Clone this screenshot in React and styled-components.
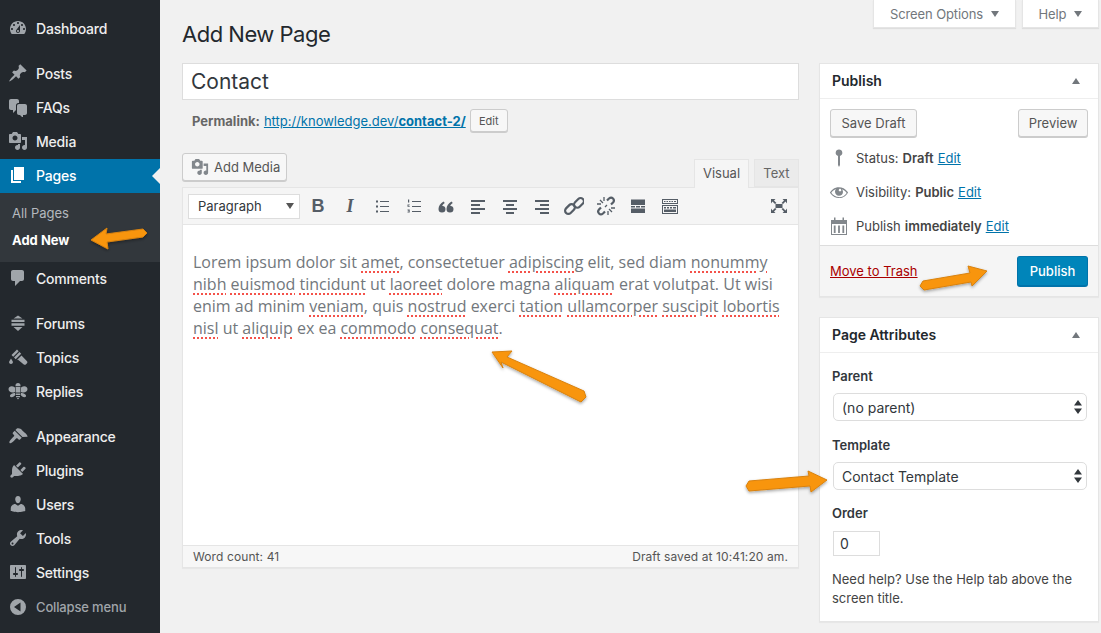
import styled, { createGlobalStyle } from 'styled-components';

const GlobalStyle = createGlobalStyle`
  html, body {
    margin: 0;
    padding: 0;
    background: #f1f1f1;
  }
  * {
    box-sizing: border-box;
  }
`;

const uiFont = `Inter, Roboto, "Liberation Sans", sans-serif`;

const paths = {
  dashboard:
    'M3.76 16h12.48c1.1-1.37 1.76-3.11 1.76-5 0-4.42-3.58-8-8-8s-8 3.58-8 8c0 1.89.66 3.63 1.76 5zM10 4c.55 0 1 .45 1 1s-.45 1-1 1-1-.45-1-1 .45-1 1-1zM6 6c.55 0 1 .45 1 1s-.45 1-1 1-1-.45-1-1 .45-1 1-1zm8 0c.55 0 1 .45 1 1s-.45 1-1 1-1-.45-1-1 .45-1 1-1zm-5.37 5.55L12 7v6c0 1.1-.9 2-2 2s-2-.9-2-2c0-.57.24-1.08.63-1.45zM4 10c.55 0 1 .45 1 1s-.45 1-1 1-1-.45-1-1 .45-1 1-1zm12 0c.55 0 1 .45 1 1s-.45 1-1 1-1-.45-1-1 .45-1 1-1zm-5 3c0-.55-.45-1-1-1s-1 .45-1 1 .45 1 1 1 1-.45 1-1z',
  post: 'M10.44 3.02l1.82-1.82 6.36 6.35-1.83 1.82c-1.05-.68-2.48-.57-3.41.36l-.75.75c-.92.93-1.04 2.35-.35 3.41l-1.83 1.82-2.41-2.41-2.8 2.79c-.42.42-3.38 2.71-3.8 2.29s1.86-3.39 2.28-3.81l2.79-2.79L4.1 9.36l1.83-1.82c1.05.69 2.48.57 3.41-.36l.75-.75c.93-.92 1.05-2.35.35-3.41z',
  chat: 'M11 6h-.82C9.07 6 8 7.2 8 8.16V13l-3 3v-3H3c-1.11 0-2-.89-2-2V4c0-1.1.89-2 2-2h6c1.11 0 2 .89 2 2v2zm0 1h6c1.1 0 2 .9 2 2v7c0 1.11-.9 2-2 2h-2v3l-3-3h-1c-1.11 0-2-.89-2-2V9c0-1.1.89-2 2-2z',
  media:
    'M13 11V4c0-.55-.45-1-1-1h-1.67L9 1H5L3.67 3H2c-.55 0-1 .45-1 1v7c0 .55.45 1 1 1h10c.55 0 1-.45 1-1zM7 4.5c1.38 0 2.5 1.12 2.5 2.5S8.38 9.5 7 9.5 4.5 8.38 4.5 7 5.62 4.5 7 4.5zM14 6h5v10.5c0 1.38-1.12 2.5-2.5 2.5S14 17.88 14 16.5s1.12-2.5 2.5-2.5c.17 0 .34.02.5.05V9h-3V6zm-4 8.05V13h2v3.5c0 1.38-1.12 2.5-2.5 2.5S7 17.88 7 16.5 8.12 14 9.5 14c.17 0 .34.02.5.05z',
  page: 'M6 15V2h10v13H6zm-1 1h8v2H3V5h2v11z',
  comment:
    'M5 2h9c1.1 0 2 .9 2 2v7c0 1.1-.9 2-2 2h-2l-5 5v-5H5c-1.1 0-2-.9-2-2V4c0-1.1.9-2 2-2z',
  forum:
    'M10 2.500l4.500 3H5.500zM3.500 6.700h13v2.400h-13zM3.500 10.300h13v2.400h-13zM5.500 14h9L10 18z',
  topic:
    'M3.500 8L9 2.500 10.700 4.200 5.200 9.700zM6 10.500L11.500 5l1.700 1.700L7.700 12.200zM8.700 13.200L13.500 8.400l5.500 5.800c.5.6.5 1.400 0 2l-1.200 1.200c-.6.5-1.400.5-2 0L10 12.800zM3 11.500l1.800 3c.5 1.200-.5 2.500-1.800 2.500s-2.300-1.300-1.800-2.500z',
  reply:
    'M10 2a2.500 2.500 0 0 1 2.500 2.500v.7h-5v-.7A2.500 2.500 0 0 1 10 2zM7.600 6h4.800v5.500H7.600zM7 6.500C4 4.500 1 5 .5 8c0 3 3.500 4.500 6.500 3zM13 6.500c3-2 6-1.500 6.500 1.500 0 3-3.500 4.500-6.500 3zM7 12c-2.500 0-5.500 1.500-5 3.500 1.500 1.500 4 .5 5.500-2zM13 12c2.500 0 5.500 1.500 5 3.500-1.500 1.500-4 .5-5.500-2zM8 12.500h4V14H8zM8 15h4v1.300H8zM8.800 17h2.400L10 18.500z',
  appearance:
    'M14.48 11.06L7.41 3.99l1.5-1.5c.5-.56 2.3-.47 3.51.32 1.21.8 1.43 1.28 2.66 2.51 1.23 1.22 2.22 1.83 3.09 2.73.86.9 1.47 2.23 1.41 2.7zm-.71.71L6.7 4.7 4.93 6.47c-.39.39-.39 1.02 0 1.41l1.06 1.06c.39.39.39 1.03 0 1.42-.6.6-1.43 1.27-2.21 2.05-2.06 2.06-3.02 3.62-2.17 4.47.84.85 2.41-.11 4.47-2.17.78-.78 1.45-1.61 2.05-2.21.39-.39 1.03-.39 1.42 0l1.06 1.06c.39.39 1.02.39 1.41 0z',
  plugin:
    'M13.11 4.36L9.87 7.6 8 5.73l3.24-3.24c.35-.34 1.05-.2 1.56.32.52.51.66 1.21.31 1.55zm-8 1.77l.91-1.12 9.01 9.01-1.19.84c-.71.71-2.63 1.16-3.82 1.16H6.14L4.9 17.26c-.59.59-1.54.59-2.12 0-.59-.58-.59-1.53 0-2.12l1.24-1.24v-3.88c0-1.13.4-3.19 1.09-3.89zm7.26 3.97l3.24-3.24c.34-.35 1.04-.21 1.55.31.52.51.66 1.21.31 1.55l-3.24 3.25z',
  users:
    'M10 9.25c-2.27 0-2.73-3.44-2.73-3.44C7 4.02 7.82 2 9.97 2c2.16 0 2.98 2.02 2.71 3.81 0 0-.41 3.44-2.68 3.44zm0 2.57L12.72 10c2.39 0 4.52 2.33 4.52 4.53v2.49s-3.65 1.13-7.24 1.13c-3.65 0-7.24-1.13-7.24-1.13v-2.49c0-2.25 1.94-4.48 4.47-4.48z',
  tools:
    'M16.68 9.77c-1.34 1.34-3.3 1.67-4.95.99l-5.41 6.52c-.99.99-2.59.99-3.58 0s-.99-2.59 0-3.57l6.52-5.42c-.68-1.65-.35-3.61.99-4.95 1.28-1.28 3.12-1.62 4.72-1.06l-2.89 2.89 2.82 2.82 2.86-2.87c.53 1.58.18 3.4-1.08 4.65zM3.81 16.21c.4.39 1.04.39 1.43 0 .4-.4.4-1.04 0-1.44-.39-.39-1.03-.39-1.43 0-.39.4-.39 1.04 0 1.44z',
  settings:
    'M18 16V4c0-.55-.45-1-1-1H3c-.55 0-1 .45-1 1v12c0 .55.45 1 1 1h14c.55 0 1-.45 1-1zM8 11h1c.55 0 1 .45 1 1s-.45 1-1 1H8v1.5c0 .28-.22.5-.5.5s-.5-.22-.5-.5V13H6c-.55 0-1-.45-1-1s.45-1 1-1h1V5.5c0-.28.22-.5.5-.5s.5.22.5.5V11zm5-2h-1c-.55 0-1-.45-1-1s.45-1 1-1h1V5.5c0-.28.22-.5.5-.5s.5.22.5.5V7h1c.55 0 1 .45 1 1s-.45 1-1 1h-1v5.500c0 .28-.22.5-.5.5s-.5-.22-.5-.5V9z',
  collapse: 'M10 2a8 8 0 1 0 0 16 8 8 0 0 0 0-16zm2.500 3.500v9L6 10z',
  pin: 'M10 1.500a3.300 3.300 0 0 1 1 6.450V17l-1 2-1-2V7.950A3.300 3.300 0 0 1 10 1.500z',
  eye: 'M18.3 9.5C15 4.9 8.5 3.8 3.9 7.2c-1.2.9-2.200 2.100-3 3.400.2.4.5.8.8 1.200 3.300 4.600 9.600 5.600 14.200 2.400.9-.7 1.700-1.400 2.400-2.400.3-.4.5-.8.8-1.200-.3-.4-.5-.8-.8-1.100zm-8.200-2.300c.5-.5 1.300-.5 1.800 0s.5 1.300 0 1.800-1.300.5-1.800 0-.5-1.300 0-1.800zm-.1 7.700c-3.100 0-6-1.600-7.700-4.200C3.500 9 5.100 7.800 7 7c-.7.800-1 1.700-1 2.700 0 2.200 1.700 4.100 4 4.100s4-1.700 4-3.900c0-1-.4-2-1-2.700 1.900.8 3.500 2 4.700 3.700-1.700 2.700-4.600 4.300-7.700 4.300z',
  calendar:
    'M5 1.500h1.500V4h7V1.500H15V4h3v15H2V4h3zM3 8v10h14V8zM4.800 9.500h1.800V17H4.800zM9.100 9.500h1.800V17H9.100zM13.400 9.500h1.800V17h-1.800z',
  bulletList:
    'M4 4.500h2v2H4zM8 5h9v1H8zM4 9.500h2v2H4zM8 10h9v1H8zM4 14.500h2v2H4zM8 15h9v1H8z',
  numberList:
    'M4 3.500h1.200v3H4zM3.500 8.500h2.200v.8H4.500v.6h1.200v.8H3.500zM3.500 13.500h2.200v3H3.500v-.7h1.300v-.5H3.800v-.7h1v-.3H3.500zM8 5h9v1H8zM8 10h9v1H8zM8 15h9v1H8z',
  quote:
    'M9.500 13a3.500 3.500 0 1 1-7 0c0-3.200 2-5.800 5-7.500l1.300 1.500c-1.500 1-2.400 2-2.500 2.900 1.800-.2 3.200 1.100 3.200 3.100zM17.500 13a3.500 3.500 0 1 1-7 0c0-3.200 2-5.800 5-7.500l1.300 1.500c-1.500 1-2.400 2-2.500 2.900 1.800-.2 3.200 1.100 3.200 3.100z',
  alignLeft: 'M3 4h14v2H3zM3 8h9v2H3zM3 12h14v2H3zM3 16h9v2H3z',
  alignCenter: 'M3 4h14v2H3zM6 8h8v2H6zM3 12h14v2H3zM6 16h8v2H6z',
  alignRight: 'M3 4h14v2H3zM8 8h9v2H8zM3 12h14v2H3zM8 16h9v2H8z',
  more: 'M3 3.500h14V9H3zM3 10h4v1.500H3zM8 10h4v1.500H8zM13 10h4v1.500h-4zM3 12.500h14V17H3z',
  kitchenSink:
    'M2 3h16v5H2zM3 4v3h14V4zM4 5h1.500v1H4zM6.500 5H8v1H6.500zM9 5h1.500v1H9zM11.500 5H13v1h-1.500zM14 5h2v1h-2zM2 9h16v9H2zM3 10v7h14v-7zM4 11h2v1.500H4zM7 11h2v1.500H7zM10 11h2v1.500h-2zM13 11h3v1.500h-3zM4 13.500h12V16H4z',
  fullscreen:
    'M2 3h4.500L5 4.500 7.500 7 6 8 3.500 5.500 2 7.500zM18 3v4.500L16.500 5.500 14 8l-1.500-1L15 4.500 13.500 3zM2 17v-4.500l1.500 2L6 12l1.500 1L5 15.500 6.500 17zM18 17h-4.500l1.500-1.500L12.500 13l1.500-1 2.500 2.500 1.500-2zM6.500 8h7v4h-7z',
};

const Glyph = styled.svg`
  width: ${(p) => p.$size || 20}px;
  height: ${(p) => p.$size || 20}px;
  flex: none;
  fill: currentColor;
  fill-rule: evenodd;
`;

const Icon = ({ name, size }) => (
  <Glyph viewBox="0 0 20 20" $size={size}>
    <path d={paths[name]} />
  </Glyph>
);

const Layout = styled.div`
  position: relative;
  display: flex;
  width: 1101px;
  height: 633px;
  overflow: hidden;
  background: #f1f1f1;
  font-family: ${uiFont};
  color: #32373c;
`;

/* sidebar */
const Sidebar = styled.nav`
  width: 160px;
  flex: none;
  padding-top: 12px;
  background: #23282d;
`;

const MenuItem = styled.div`
  position: relative;
  display: flex;
  align-items: center;
  gap: 8px;
  height: 34px;
  padding: 0 0 2px 8px;
  margin-top: ${(p) => (p.$spaced ? '11px' : '0')};
  background: ${(p) => (p.$active ? '#0073aa' : 'transparent')};
  color: ${(p) => (p.$active ? '#fff' : '#eee')};
  font-size: 14px;
  font-weight: 500;
  letter-spacing: -0.2px;

  svg {
    color: ${(p) => (p.$active ? '#fff' : '#a0a5aa')};
  }

  ${(p) =>
    p.$active &&
    `
    &::after {
      content: '';
      position: absolute;
      right: 0;
      top: 50%;
      margin-top: -8px;
      border: 8px solid transparent;
      border-right-color: #f1f1f1;
    }
  `}
`;

const CollapseItem = styled(MenuItem)`
  color: #a0a5aa;
  font-size: 13px;
  letter-spacing: -0.15px;
  padding-bottom: 0;
`;

const SubMenu = styled.div`
  height: 69px;
  padding: 7px 0 0 12px;
  background: #32373c;
`;

const SubItem = styled.div`
  height: 27px;
  line-height: 27px;
  font-size: 13px;
  font-weight: ${(p) => (p.$current ? 700 : 400)};
  color: ${(p) => (p.$current ? '#fff' : '#b4b9be')};
`;

/* main columns */
const Main = styled.main`
  display: flex;
  gap: 20px;
  padding-left: 22px;
`;

const EditorColumn = styled.div`
  width: 617px;
`;

const SideColumn = styled.div`
  width: 280px;
`;

const Title = styled.h1`
  margin: 0;
  height: 63px;
  padding-top: 19px;
  font-size: 22px;
  line-height: 30px;
  font-weight: 400;
  letter-spacing: -0.5px;
  color: #23282d;
`;

const TitleField = styled.div`
  height: 37px;
  padding-left: 8px;
  line-height: 35px;
  font-size: 21px;
  color: #32373c;
  background: #fff;
  border: 1px solid #ddd;
`;

const PermalinkRow = styled.div`
  display: flex;
  align-items: center;
  gap: 4px;
  height: 23px;
  margin-top: 9px;
  padding-left: 10px;
  font-size: 13px;
  color: #666;
`;

const LinkText = styled.a`
  color: #0073aa;
  text-decoration: underline;
`;

const Button = styled.div`
  display: flex;
  align-items: center;
  justify-content: center;
  width: ${(p) => p.$width}px;
  height: ${(p) => p.$height}px;
  font-size: ${(p) => p.$fontSize || 13}px;
  color: #555;
  background: #f7f7f7;
  border: 1px solid #ccc;
  border-radius: 3px;
  box-shadow: 0 1px 0 #ccc;
`;

const MediaButton = styled(Button)`
  justify-content: flex-start;
  gap: 5px;
  padding-left: 8px;

  svg {
    color: #82878c;
  }
`;

const PrimaryButton = styled.div`
  display: flex;
  align-items: center;
  justify-content: center;
  width: 71px;
  height: 31px;
  font-size: 13px;
  font-weight: 500;
  color: #fff;
  background: #0085ba;
  border: 1px solid #0073aa;
  border-bottom-width: 2px;
  border-radius: 3px;
`;

const EditorHead = styled.div`
  display: flex;
  justify-content: space-between;
  height: 34px;
  margin-top: 21px;
`;

const Tabs = styled.div`
  display: flex;
  align-items: flex-end;
  gap: 5px;
`;

const Tab = styled.div`
  height: ${(p) => (p.$active ? 29 : 28)}px;
  width: ${(p) => (p.$active ? 55 : 45)}px;
  margin-bottom: ${(p) => (p.$active ? '-1px' : '0')};
  position: relative;
  line-height: 27px;
  text-align: center;
  font-size: 13px;
  color: ${(p) => (p.$active ? '#555' : '#666')};
  background: ${(p) => (p.$active ? '#f5f5f5' : '#ebebeb')};
  border: 1px solid #e5e5e5;
  border-bottom: ${(p) => (p.$active ? 'none' : '1px solid #e5e5e5')};
`;

const EditorBox = styled.div`
  display: flex;
  flex-direction: column;
  height: 381px;
  background: #fff;
  border: 1px solid #e5e5e5;
  box-shadow: 0 1px 1px rgba(0, 0, 0, 0.04);
`;

const Toolbar = styled.div`
  display: flex;
  align-items: center;
  height: 37px;
  padding-left: 5px;
  background: #f5f5f5;
  border-bottom: 1px solid #e5e5e5;
  color: #555d66;
`;

const FormatSelect = styled.div`
  display: flex;
  align-items: center;
  justify-content: space-between;
  width: 112px;
  height: 25px;
  margin-right: 2px;
  padding: 0 5px 0 9px;
  font-size: 13px;
  color: #32373c;
  background: #fff;
  border: 1px solid #ddd;
`;

const DownCaret = styled.span`
  width: 0;
  height: 0;
  border-left: 4.5px solid transparent;
  border-right: 4.5px solid transparent;
  border-top: 6px solid ${(p) => p.$color || '#555'};
`;

const ToolButton = styled.div`
  display: flex;
  align-items: center;
  justify-content: center;
  width: 32px;
  height: 25px;
  font-size: 18px;
  font-weight: 700;
  font-style: ${(p) => (p.$italic ? 'italic' : 'normal')};
  font-family: ${(p) =>
    p.$italic ? '"Liberation Serif", serif' : '"Liberation Sans", sans-serif'};
  margin-left: ${(p) => (p.$push ? 'auto' : '0')};
  margin-right: ${(p) => (p.$push ? '3px' : '0')};
`;

const Content = styled.div`
  flex: 1;
  padding: 26px 10px 0;
  font-family: "Open Sans", sans-serif;
  font-size: 16px;
  line-height: 22px;
  color: #72777c;
`;

const Line = styled.div`
  white-space: nowrap;
`;

const Typo = styled.span`
  text-decoration: underline dotted #f4524a 2px;
  text-underline-offset: 3px;
`;

const StatusBar = styled.div`
  display: flex;
  align-items: center;
  justify-content: space-between;
  height: 22px;
  padding: 0 10px;
  font-size: 12px;
  letter-spacing: 0.1px;
  color: #555;
  background: #f7f7f7;
  border-top: 1px solid #e5e5e5;
`;

/* side column */
const ScreenTabs = styled.div`
  display: flex;
  justify-content: flex-end;
  gap: 6px;
  height: 63px;
`;

const ScreenTab = styled.div`
  display: flex;
  align-items: center;
  justify-content: center;
  gap: 8px;
  width: ${(p) => p.$width}px;
  height: 28px;
  font-size: 13px;
  letter-spacing: -0.1px;
  color: #72777c;
  background: #fff;
  border: 1px solid #e5e5e5;
  border-top: none;
  box-shadow: 0 1px 1px rgba(0, 0, 0, 0.08);
`;

const Box = styled.section`
  background: #fff;
  border: 1px solid #e5e5e5;
  box-shadow: 0 1px 1px rgba(0, 0, 0, 0.04);
  margin-bottom: ${(p) => p.$gap || 0}px;
`;

const BoxHeader = styled.div`
  display: flex;
  align-items: center;
  justify-content: space-between;
  height: 35px;
  padding: 0 18px 1px 12px;
  font-size: 14px;
  font-weight: 600;
  color: #23282d;
  border-bottom: 1px solid #eee;
`;

const UpCaret = styled.span`
  width: 0;
  height: 0;
  border-left: 4px solid transparent;
  border-right: 4px solid transparent;
  border-bottom: 6px solid #72777c;
`;

const ButtonRow = styled.div`
  display: flex;
  justify-content: space-between;
  padding: 10px 10px 4px;
`;

const InfoRow = styled.div`
  display: flex;
  align-items: center;
  gap: 7px;
  height: 34px;
  padding-left: 9px;
  font-size: 13px;
  word-spacing: 0.4px;
  color: #444;

  svg {
    color: #82878c;
  }

  b {
    font-weight: 600;
  }
`;

const BoxFooter = styled.div`
  display: flex;
  align-items: center;
  justify-content: space-between;
  height: 51px;
  margin-top: 2px;
  padding: 0 10px;
  background: #f5f5f5;
  border-top: 1px solid #ddd;
`;

const TrashLink = styled.a`
  font-size: 13px;
  color: #a00;
  text-decoration: underline;
`;

const AttributesBody = styled.div`
  padding: 13px 12px 0;
  height: 268px;
`;

const FieldLabel = styled.div`
  height: 20px;
  line-height: 20px;
  font-size: 13px;
  font-weight: 600;
  color: #32373c;
`;

const SelectField = styled.div`
  display: flex;
  align-items: center;
  justify-content: space-between;
  width: 254px;
  height: 28px;
  margin: 7px 0 ${(p) => p.$after}px 1px;
  padding: 0 4px 0 8px;
  font-size: 14px;
  color: #32373c;
  background: #fff;
  border: 1px solid #ddd;
  border-radius: 5px;
`;

const Spinner = styled.svg`
  width: 8px;
  height: 14px;
  fill: #32373c;
`;

const OrderField = styled.div`
  width: 47px;
  height: 25px;
  margin: 8px 0 14px 1px;
  padding-left: 6px;
  line-height: 23px;
  font-size: 14px;
  color: #32373c;
  background: #fff;
  border: 1px solid #ddd;
`;

const HelpText = styled.p`
  margin: 0;
  font-size: 13px;
  line-height: 19px;
  color: #444;
`;

/* callout arrows, drawn over the page */
const ArrowLayer = styled.svg`
  position: absolute;
  left: 0;
  top: 0;
  width: 1101px;
  height: 633px;
  pointer-events: none;
`;

const arrows = [
  '91,240 107,228 106,234 143,229 147,233 143,237 107,242 108,249',
  '987,271 968,266 970,273 923,281 920,286 924,290 971,282 972,286',
  '492,352 512,351 507,357 584,391 586,397 581,402 501,362 503,368',
  '827,480 808,471 809,476 749,481 746,486 749,491 810,486 811,492',
];

const menuTop = [
  { icon: 'post', label: 'Posts', spaced: true },
  { icon: 'chat', label: 'FAQs' },
  { icon: 'media', label: 'Media' },
];

const menuBottom = [
  { icon: 'forum', label: 'Forums', spaced: true },
  { icon: 'topic', label: 'Topics' },
  { icon: 'reply', label: 'Replies' },
  { icon: 'appearance', label: 'Appearance', spaced: true },
  { icon: 'plugin', label: 'Plugins' },
  { icon: 'users', label: 'Users' },
  { icon: 'tools', label: 'Tools' },
  { icon: 'settings', label: 'Settings' },
];

const tools = [
  'bulletList',
  'numberList',
  'quote',
  'alignLeft',
  'alignCenter',
  'alignRight',
];

const SelectSpinner = () => (
  <Spinner viewBox="0 0 8 14">
    <path d="M4 0l4 5.500H0zM4 14L0 8.500h8z" />
  </Spinner>
);

const App = () => {
  return (
    <>
      <GlobalStyle />
      <Layout>
        <Sidebar>
          <MenuItem>
            <Icon name="dashboard" />
            Dashboard
          </MenuItem>
          {menuTop.map((item) => (
            <MenuItem key={item.label} $spaced={item.spaced}>
              <Icon name={item.icon} />
              {item.label}
            </MenuItem>
          ))}
          <MenuItem $active>
            <Icon name="page" />
            Pages
          </MenuItem>
          <SubMenu>
            <SubItem>All Pages</SubItem>
            <SubItem $current>Add New</SubItem>
          </SubMenu>
          <MenuItem>
            <Icon name="comment" />
            Comments
          </MenuItem>
          {menuBottom.map((item) => (
            <MenuItem key={item.label} $spaced={item.spaced}>
              <Icon name={item.icon} />
              {item.label}
            </MenuItem>
          ))}
          <CollapseItem>
            <Icon name="collapse" />
            Collapse menu
          </CollapseItem>
        </Sidebar>

        <Main>
          <EditorColumn>
            <Title>Add New Page</Title>
            <TitleField>Contact</TitleField>
            <PermalinkRow>
              <b>Permalink:</b>
              <LinkText>
                http://knowledge.dev/<b>contact-2/</b>
              </LinkText>
              <Button $width={38} $height={23} $fontSize={11}>
                Edit
              </Button>
            </PermalinkRow>
            <EditorHead>
              <MediaButton $width={105} $height={28}>
                <Icon name="media" size={18} />
                Add Media
              </MediaButton>
              <Tabs>
                <Tab $active>Visual</Tab>
                <Tab>Text</Tab>
              </Tabs>
            </EditorHead>
            <EditorBox>
              <Toolbar>
                <FormatSelect>
                  Paragraph
                  <DownCaret />
                </FormatSelect>
                <ToolButton>B</ToolButton>
                <ToolButton $italic>I</ToolButton>
                {tools.map((name) => (
                  <ToolButton key={name}>
                    <Icon name={name} />
                  </ToolButton>
                ))}
                <ToolButton>
                  <svg width="20" height="20" viewBox="0 0 20 20" fill="none" stroke="currentColor" strokeWidth="2.2">
                    <rect x="9.5" y="2.2" width="11" height="6.5" rx="3.2" transform="rotate(-45 15 5.5) translate(-1 1)" />
                    <rect x="0.5" y="11.2" width="11" height="6.5" rx="3.2" transform="rotate(-45 6 14.5) translate(1 -1)" />
                  </svg>
                </ToolButton>
                <ToolButton>
                  <svg width="20" height="20" viewBox="0 0 20 20" fill="none" stroke="currentColor" strokeWidth="2.2">
                    <path d="M11 4.500l2-2c1.200-1 3-1 4 0s1 2.800 0 4l-2 2M9 15.500l-2 2c-1.200 1-3 1-4 0s-1-2.800 0-4l2-2" />
                    <path strokeWidth="1.300" d="M8 1v4M1 8h4M4 4l3 3M12 19v-4M19 12h-4M16 16l-3-3M11 9l-2 2" />
                  </svg>
                </ToolButton>
                <ToolButton>
                  <Icon name="more" />
                </ToolButton>
                <ToolButton>
                  <Icon name="kitchenSink" />
                </ToolButton>
                <ToolButton $push>
                  <Icon name="fullscreen" />
                </ToolButton>
              </Toolbar>
              <Content>
                <Line>
                  Lorem ipsum dolor sit <Typo>amet</Typo>, consectetuer <Typo>adipiscing</Typo> elit, sed diam{' '}
                  <Typo>nonummy</Typo>
                </Line>
                <Line>
                  <Typo>nibh</Typo> <Typo>euismod</Typo> <Typo>tincidunt</Typo> ut <Typo>laoreet</Typo> dolore magna{' '}
                  <Typo>aliquam</Typo> erat volutpat. Ut wisi
                </Line>
                <Line>
                  enim ad minim <Typo>veniam</Typo>, quis <Typo>nostrud</Typo> exerci <Typo>tation</Typo>{' '}
                  <Typo>ullamcorper</Typo> <Typo>suscipit</Typo> <Typo>lobortis</Typo>
                </Line>
                <Line>
                  <Typo>nisl</Typo> ut <Typo>aliquip</Typo> ex ea <Typo>commodo</Typo> <Typo>consequat</Typo>.
                </Line>
              </Content>
              <StatusBar>
                <span>Word count: 41</span>
                <span>Draft saved at 10:41:20 am.</span>
              </StatusBar>
            </EditorBox>
          </EditorColumn>

          <SideColumn>
            <ScreenTabs>
              <ScreenTab $width={143}>
                Screen Options
                <DownCaret $color="#72777c" />
              </ScreenTab>
              <ScreenTab $width={77}>
                Help
                <DownCaret $color="#72777c" />
              </ScreenTab>
            </ScreenTabs>

            <Box $gap={20}>
              <BoxHeader>
                Publish
                <UpCaret />
              </BoxHeader>
              <ButtonRow>
                <Button $width={87} $height={28}>
                  Save Draft
                </Button>
                <Button $width={70} $height={28}>
                  Preview
                </Button>
              </ButtonRow>
              <InfoRow>
                <Icon name="pin" />
                <span>
                  Status: <b>Draft</b> <LinkText>Edit</LinkText>
                </span>
              </InfoRow>
              <InfoRow>
                <Icon name="eye" />
                <span>
                  Visibility: <b>Public</b> <LinkText>Edit</LinkText>
                </span>
              </InfoRow>
              <InfoRow>
                <Icon name="calendar" />
                <span>
                  Publish <b>immediately</b> <LinkText>Edit</LinkText>
                </span>
              </InfoRow>
              <BoxFooter>
                <TrashLink>Move to Trash</TrashLink>
                <PrimaryButton>Publish</PrimaryButton>
              </BoxFooter>
            </Box>

            <Box>
              <BoxHeader>
                Page Attributes
                <UpCaret />
              </BoxHeader>
              <AttributesBody>
                <FieldLabel>Parent</FieldLabel>
                <SelectField $after={14}>
                  (no parent)
                  <SelectSpinner />
                </SelectField>
                <FieldLabel>Template</FieldLabel>
                <SelectField $after={13}>
                  Contact Template
                  <SelectSpinner />
                </SelectField>
                <FieldLabel>Order</FieldLabel>
                <OrderField>0</OrderField>
                <HelpText>Need help? Use the Help tab above the screen title.</HelpText>
              </AttributesBody>
            </Box>
          </SideColumn>
        </Main>

        <ArrowLayer viewBox="0 0 1101 633">
          <defs>
            <filter id="arrowShadow" x="-20%" y="-20%" width="140%" height="150%">
              <feDropShadow dx="0" dy="1.5" stdDeviation="1.5" floodColor="#000" floodOpacity="0.35" />
            </filter>
          </defs>
          {arrows.map((points) => (
            <polygon
              key={points}
              points={points}
              fill="#f8950f"
              stroke="#d9820f"
              strokeWidth="1"
              strokeLinejoin="round"
              filter="url(#arrowShadow)"
            />
          ))}
        </ArrowLayer>
      </Layout>
    </>
  );
};

export default App;
